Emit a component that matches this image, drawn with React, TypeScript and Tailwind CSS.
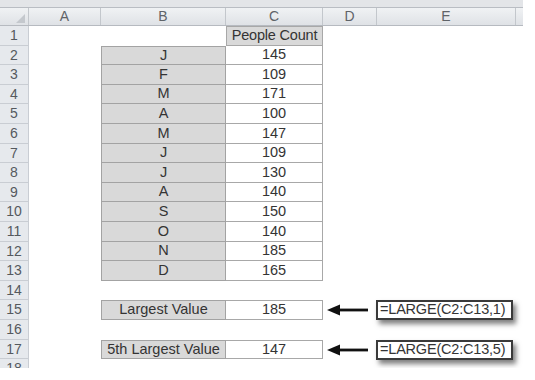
import React from "react";

type Row = {
  n: number;
  h: string;
  b?: string;
  c?: string;
  header?: boolean;
  formula?: string;
};

const months = ["J", "F", "M", "A", "M", "J", "J", "A", "S", "O", "N", "D"];
const counts = ["145", "109", "171", "100", "147", "109", "130", "140", "150", "140", "185", "165"];
const heights = [
  "h-[20px]", "h-[19px]", "h-[20px]", "h-[19px]", "h-[20px]", "h-[20px]",
  "h-[19px]", "h-[20px]", "h-[19px]", "h-[20px]", "h-[20px]", "h-[19px]",
  "h-[20px]", "h-[19px]", "h-[20px]", "h-[20px]", "h-[19px]", "h-[20px]",
];

const rows: Row[] = [
  { n: 1, h: heights[0], c: "People Count", header: true },
  ...months.map((m, i) => ({ n: i + 2, h: heights[i + 1], b: m, c: counts[i] })),
  { n: 14, h: heights[13] },
  { n: 15, h: heights[14], b: "Largest Value", c: "185", formula: "=LARGE(C2:C13,1)" },
  { n: 16, h: heights[15] },
  { n: 17, h: heights[16], b: "5th Largest Value", c: "147", formula: "=LARGE(C2:C13,5)" },
  { n: 18, h: heights[17] },
];

function Arrow() {
  return (
    <svg width="42" height="12" viewBox="0 0 42 12" className="ml-[4px]">
      <polygon points="0,6 13,0.5 13,11.5" fill="#111" />
      <rect x="12" y="4.6" width="29" height="2.8" fill="#111" />
    </svg>
  );
}

export default function App() {
  return (
    <div className="h-[380px] w-[535px] overflow-hidden bg-white font-['Liberation_Sans',Arial,sans-serif] text-[14.5px] text-[#343434]">
      <div className="h-[368px] overflow-hidden">
        <div className="h-[8px] w-[523px] border-b border-[#b9bdc3] bg-[#e3e5e8]" />
        <div className="flex h-[18px] w-[523px] border-b border-[#b6bac0] bg-gradient-to-b from-[#f0f2f4] to-[#dfe2e6] text-[14px] text-[#5f6368]">
          <div className="relative w-[29px] border-r border-[#c3c7cc]">
            <svg width="9" height="9" viewBox="0 0 9 9" className="absolute bottom-[2px] right-[3px]">
              <polygon points="9,0 9,9 0,9" fill="#c4c8cd" />
            </svg>
          </div>
          <div className="flex w-[72px] items-center justify-center border-r border-[#c3c7cc]">A</div>
          <div className="flex w-[125px] items-center justify-center border-r border-[#c3c7cc]">B</div>
          <div className="flex w-[97px] items-center justify-center border-r border-[#c3c7cc]">C</div>
          <div className="flex w-[54px] items-center justify-center border-r border-[#c3c7cc]">D</div>
          <div className="flex w-[139px] items-center justify-center border-r border-[#c3c7cc]">E</div>
          <div className="w-[7px]" />
        </div>
        {rows.map((r) => {
          const boxTop = r.header || r.n === 15 || r.n === 17;
          return (
            <div key={r.n} className={`flex ${r.h}`}>
              <div className="flex w-[29px] shrink-0 items-center justify-center border-b border-r border-[#c9cdd3] bg-[#e6e9ed] text-[14px] text-[#55595e]">
                {r.n}
              </div>
              <div className="w-[72px] shrink-0" />
              {r.b ? (
                <div
                  className={`flex w-[125px] shrink-0 items-center justify-center border-x border-b border-[#a3a3a3] bg-[#d9d9d9] ${
                    r.n === 2 || r.n === 15 || r.n === 17 ? "border-t" : ""
                  }`}
                >
                  {r.b}
                </div>
              ) : (
                <div className="w-[125px] shrink-0" />
              )}
              {r.c ? (
                <div
                  className={`flex w-[97px] shrink-0 items-center justify-center border-b border-r border-[#a8a8a8] ${
                    boxTop ? "border-t" : ""
                  } ${r.header ? "border-l bg-[#d9d9d9] tracking-[-0.2px]" : "bg-white"}`}
                >
                  {r.c}
                </div>
              ) : (
                <div className="w-[97px] shrink-0" />
              )}
              <div className="flex w-[54px] shrink-0 items-center">{r.formula && <Arrow />}</div>
              <div className="w-[139px] shrink-0">
                {r.formula && (
                  <div className="-ml-px flex h-[20px] w-[137px] items-center border-2 border-[#3a3a3a] bg-white pl-[2px] tracking-[-0.2px] shadow-[3px_4px_5px_rgba(0,0,0,0.5)]">
                    {r.formula}
                  </div>
                )}
              </div>
            </div>
          );
        })}
      </div>
    </div>
  );
}
